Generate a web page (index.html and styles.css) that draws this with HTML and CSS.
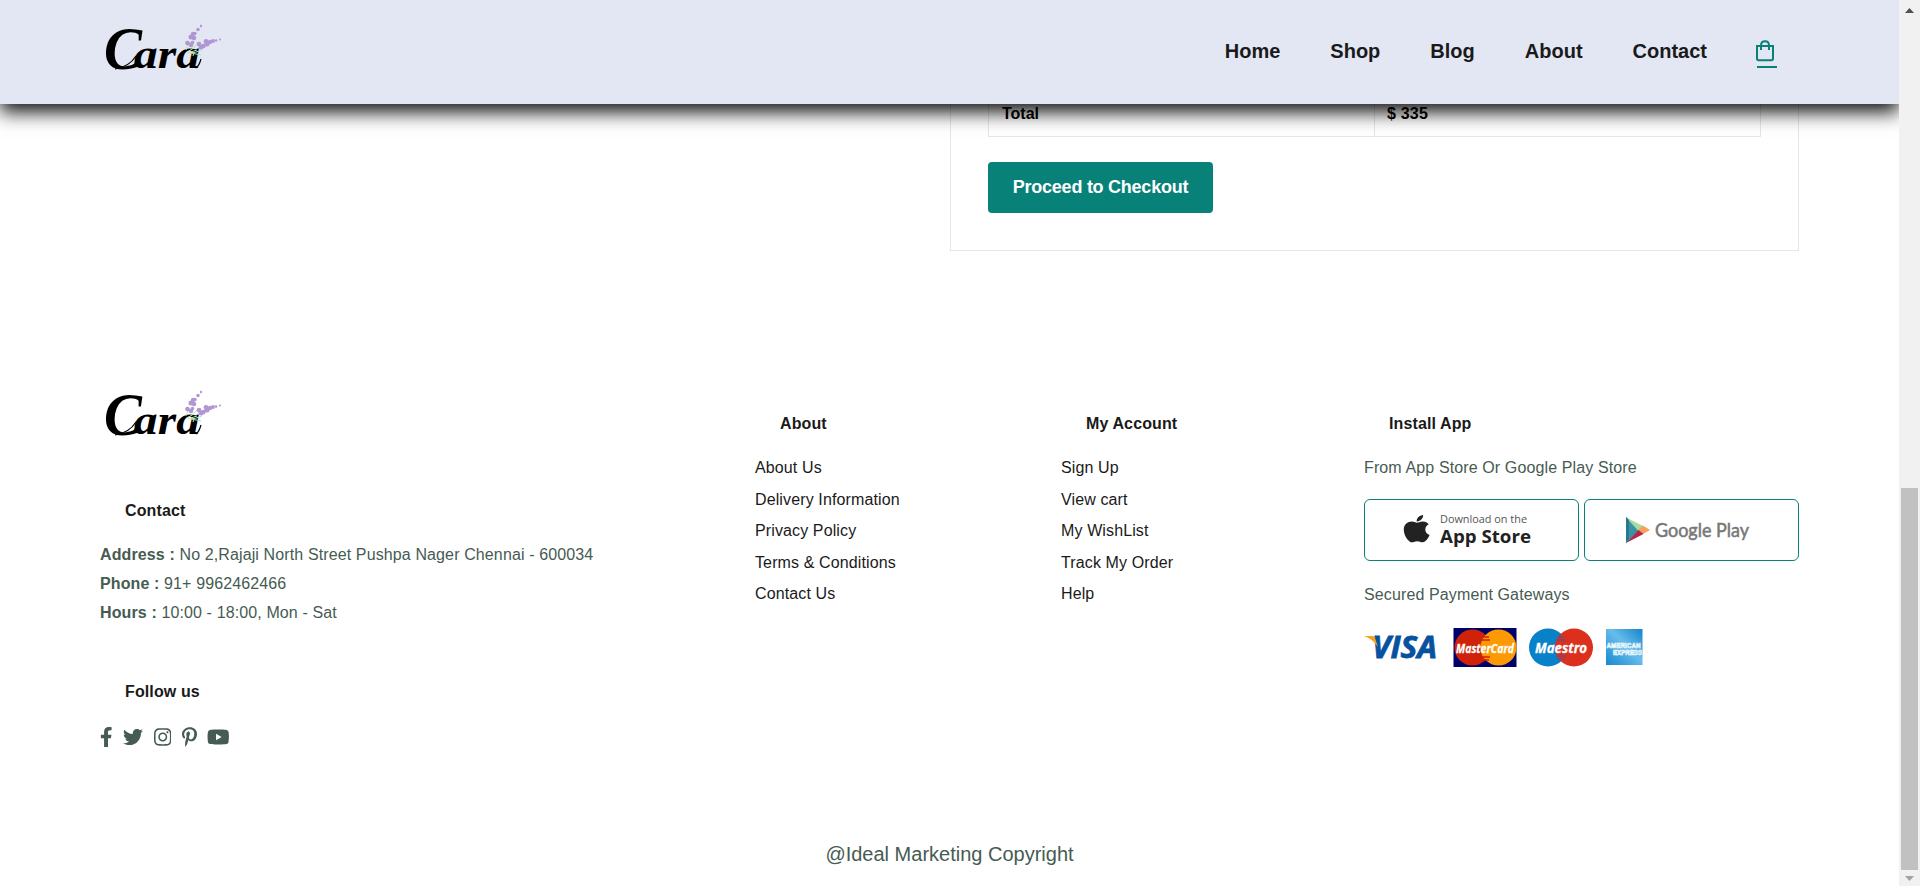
FILE: index.html
```html
<!DOCTYPE html>
<html lang="en">
<head>
<meta charset="utf-8">
<title>Cara - Cart</title>
<link rel="stylesheet" href="styles.css">
</head>
<body>
<svg class="defs" width="0" height="0" aria-hidden="true">
  <defs>
    <symbol id="logo" viewBox="0 0 130 60">
      <g class="logo-text">
        <text x="1" y="51" font-size="61" textLength="38" lengthAdjust="spacingAndGlyphs">C</text>
        <text x="31" y="50" font-size="43" textLength="66" lengthAdjust="spacingAndGlyphs">ara</text>
      </g>
      <path d="M12 51Q26 49 33 38M93 50q3-2 5-9" stroke="#000" stroke-width="1.200" fill="none"/>
      <g stroke="#b5e3b4" stroke-width="1" fill="none">
        <path d="M84 34q7-3 10-8M85 35q8 0 14-3M88 35l10 2M83 32l3-8M88 34l6-2M91 34l-1 4"/>
      </g>
      <g fill="#b096d3">
        <circle cx="84.500" cy="25" r="2.300"/><circle cx="88" cy="27" r="2.300"/><circle cx="89.500" cy="24.500" r="1.800"/>
        <circle cx="88" cy="19" r="2.500"/><circle cx="91" cy="20" r="2.300"/><circle cx="90" cy="16" r="2.200"/><circle cx="92" cy="15.500" r="1.700"/>
        <circle cx="95" cy="11.500" r="1.700"/><circle cx="98" cy="8" r="1.200"/>
        <circle cx="96" cy="26" r="2.300"/><circle cx="98" cy="29" r="2.500"/><circle cx="100.500" cy="28" r="2.200"/>
        <circle cx="103" cy="23.500" r="2.400"/><circle cx="104" cy="26" r="2.500"/><circle cx="107" cy="24" r="2.200"/>
        <circle cx="110" cy="23" r="1.900"/><circle cx="113" cy="22.500" r="1.300"/><circle cx="117" cy="21.500" r="1"/>
      </g>
    </symbol>
  </defs>
</svg>

<header class="header">
  <svg class="logo" width="130" height="60"><use href="#logo"/></svg>
  <nav class="nav">
    <a>Home</a><a>Shop</a><a>Blog</a><a>About</a><a>Contact</a>
    <a class="bag active"><svg width="20" height="22" viewBox="0 0 20 22" fill="none" stroke="#088178" stroke-width="2"><path d="M1 6h16v12.500q0 1.700-1.700 1.700H2.700Q1 20.200 1 18.500z"/><path d="M5 10V5.500q0-4.300 4-4.300t4 4.300V10"/></svg></a>
  </nav>
</header>

<main class="cart">
  <section class="subtotal">
    <div class="row"><strong>Total</strong><strong>$ 335</strong></div>
    <button class="checkout">Proceed to Checkout</button>
  </section>
</main>

<footer class="footer">
  <div class="col contact">
    <svg class="logo" width="130" height="60"><use href="#logo"/></svg>
    <h4>Contact</h4>
    <p><strong>Address :</strong> No 2,Rajaji North Street Pushpa Nager Chennai - 600034</p>
    <p><strong>Phone :</strong> 91+ 9962462466</p>
    <p><strong>Hours :</strong> 10:00 - 18:00, Mon - Sat</p>
    <h4 class="follow">Follow us</h4>
    <div class="social">
      <svg width="12.500" height="20" viewBox="0 0 320 512"><path d="M279.140 288l14.220-92.660h-88.910v-60.130c0-25.350 12.420-50.060 52.240-50.060h40.420V6.260S260.430 0 225.360 0c-73.220 0-121.080 44.380-121.080 124.720v70.620H22.890V288h81.390v224h100.170V288z"/></svg>
      <svg width="20" height="20" viewBox="0 0 512 512"><path d="M459.370 151.716c.325 4.548.325 9.097.325 13.645 0 138.720-105.583 298.558-298.558 298.558-59.452 0-114.680-17.219-161.137-47.106 8.447.974 16.568 1.299 25.340 1.299 49.055 0 94.213-16.568 130.274-44.832-46.132-.975-84.792-31.188-98.112-72.772 6.498.974 12.995 1.624 19.818 1.624 9.421 0 18.843-1.300 27.614-3.573-48.081-9.747-84.143-51.980-84.143-102.985v-1.299c13.969 7.797 30.214 12.670 47.431 13.319-28.264-18.843-46.781-51.005-46.781-87.391 0-19.492 5.197-37.360 14.294-52.954 51.655 63.675 129.300 105.258 216.365 109.807-1.624-7.797-2.599-15.918-2.599-24.040 0-57.828 46.782-104.934 104.934-104.934 30.213 0 57.502 12.670 76.670 33.137 23.715-4.548 46.456-13.320 66.599-25.340-7.798 24.366-24.366 44.833-46.132 57.827 21.117-2.273 41.584-8.122 60.426-16.243-14.292 20.791-32.161 39.308-52.628 54.253z"/></svg>
      <svg width="17.500" height="20" viewBox="0 0 448 512"><path d="M224.100 141c-63.600 0-114.900 51.300-114.900 114.900s51.300 114.900 114.900 114.900S339 319.500 339 255.900 287.700 141 224.100 141zm0 189.600c-41.100 0-74.700-33.500-74.700-74.700s33.500-74.700 74.700-74.700 74.700 33.500 74.700 74.700-33.600 74.700-74.700 74.700zm146.400-194.300c0 14.900-12 26.800-26.800 26.800-14.900 0-26.800-12-26.800-26.800s12-26.800 26.800-26.800 26.800 12 26.800 26.800zm76.100 27.200c-1.700-35.900-9.900-67.700-36.200-93.900-26.200-26.200-58-34.400-93.900-36.200-37-2.100-147.900-2.100-184.900 0-35.800 1.700-67.600 9.900-93.900 36.100s-34.400 58-36.200 93.900c-2.100 37-2.100 147.900 0 184.900 1.700 35.900 9.900 67.700 36.200 93.900s58 34.400 93.900 36.200c37 2.100 147.900 2.100 184.900 0 35.900-1.700 67.700-9.900 93.900-36.200 26.200-26.200 34.400-58 36.200-93.900 2.100-37 2.100-147.800 0-184.800zM398.800 388c-7.800 19.600-22.900 34.700-42.600 42.600-29.500 11.700-99.500 9-132.100 9s-102.700 2.600-132.100-9c-19.600-7.800-34.700-22.900-42.600-42.600-11.700-29.500-9-99.500-9-132.100s-2.600-102.700 9-132.100c7.800-19.600 22.900-34.700 42.600-42.600 29.500-11.700 99.500-9 132.100-9s102.700-2.600 132.100 9c19.600 7.800 34.700 22.900 42.600 42.600 11.700 29.500 9 99.500 9 132.100s2.700 102.700-9 132.100z"/></svg>
      <svg width="15" height="20" viewBox="0 0 384 512"><path d="M204 6.500C101.400 6.500 0 74.900 0 185.600 0 256 39.600 296 63.600 296c9.900 0 15.600-27.600 15.600-35.400 0-9.300-23.700-29.100-23.700-67.800 0-80.400 61.200-137.400 140.400-137.400 68.100 0 118.500 38.700 118.500 109.800 0 53.100-21.300 152.700-90.300 152.700-24.900 0-46.200-18-46.200-43.800 0-37.800 26.400-74.400 26.400-113.400 0-66.200-93.900-54.200-93.900 25.800 0 16.800 2.100 35.400 9.600 50.700-13.800 59.400-42 147.900-42 209.100 0 18.900 2.700 37.500 4.500 56.400 3.400 3.800 1.700 3.400 6.900 1.500 50.400-69 48.600-82.500 71.400-172.800 12.300 23.400 44.100 36 69.300 36 106.200 0 153.900-103.500 153.900-196.800C384 71.300 298.200 6.500 204 6.500z"/></svg>
      <svg width="22.500" height="20" viewBox="0 0 576 512"><path d="M549.655 124.083c-6.281-23.650-24.787-42.276-48.284-48.597C458.781 64 288 64 288 64S117.220 64 74.629 75.486c-23.497 6.322-42.003 24.947-48.284 48.597-11.412 42.867-11.412 132.305-11.412 132.305s0 89.438 11.412 132.305c6.281 23.650 24.787 41.500 48.284 47.821C117.220 448 288 448 288 448s170.780 0 213.371-11.486c23.497-6.321 42.003-24.171 48.284-47.821 11.412-42.867 11.412-132.305 11.412-132.305s0-89.438-11.412-132.305zm-317.510 213.508V175.185l142.739 81.205-142.739 81.201z"/></svg>
    </div>
  </div>
  <div class="col links">
    <h4>About</h4>
    <a>About Us</a><a>Delivery Information</a><a>Privacy Policy</a><a>Terms &amp; Conditions</a><a>Contact Us</a>
  </div>
  <div class="col links">
    <h4>My Account</h4>
    <a>Sign Up</a><a>View cart</a><a>My WishList</a><a>Track My Order</a><a>Help</a>
  </div>
  <div class="col install">
    <h4>Install App</h4>
    <p>From App Store Or Google Play Store</p>
    <div class="stores">
      <div class="store"><svg width="213" height="60" viewBox="0 0 213 60">
        <g transform="translate(38.500 13) scale(.0685 .0610)" fill="#222"><path d="M318.700 268.700c-.2-36.700 16.400-64.400 50-84.800-18.800-26.900-47.200-41.700-84.700-44.600-35.500-2.800-74.300 20.700-88.500 20.700-15 0-49.400-19.700-76.400-19.700C63.300 141.200 4 184.800 4 273.500q0 39.300 14.400 81.200c12.800 36.700 59 126.700 107.200 125.200 25.200-.6 43-17.900 75.800-17.900 31.800 0 48.300 17.900 76.400 17.900 48.600-.7 90.400-82.500 102.600-119.300-65.200-30.700-61.700-90-61.700-91.900zm-56.600-164.200c27.300-32.400 24.800-61.900 24-72.500-24.100 1.400-52 16.400-67.900 34.900-17.500 19.800-27.800 44.300-25.600 71.900 26.100 2 49.900-11.400 69.500-34.300z"/></g>
        <text x="75" y="23" class="badge-small" textLength="87" lengthAdjust="spacingAndGlyphs">Download on the</text>
        <text x="75" y="42.500" class="badge-big" textLength="91" lengthAdjust="spacingAndGlyphs">App Store</text>
      </svg></div>
      <div class="store"><svg width="213" height="60" viewBox="0 0 213 60">
        <path d="M41 17l13 13-13 13z" fill="#3a93a5"/><path d="M41 17.500L59 26.500 53.500 31z" fill="#a6dba0"/><path d="M58 25.500L65 30l-7 4-5-4z" fill="#f7a15d"/><path d="M41 43L53.500 30l5 4z" fill="#b0274c"/><path d="M41 17v26l3-3V20z" fill="#26798f"/>
        <text x="70" y="36.500" class="badge-play" textLength="94" lengthAdjust="spacingAndGlyphs">Google Play</text>
      </svg></div>
    </div>
    <p>Secured Payment Gateways</p>
    <svg class="pay" width="280" height="40" viewBox="0 0 280 40">
      <defs><linearGradient id="ax" x1="1" y1="0" x2="0" y2="1"><stop offset="0" stop-color="#1583cc"/><stop offset=".45" stop-color="#66bdec"/><stop offset="1" stop-color="#1687cf"/></linearGradient></defs>
      <text x="8" y="30" class="visa" textLength="65" lengthAdjust="spacingAndGlyphs">VISA</text>
      <path d="M0 8h8.500q2 0 2.500 2l3 9Q9 11 0 8z" fill="#f6a21b"/>
      <path d="M89.500 0h63v39h-63z" fill="#00006b"/>
      <circle cx="108.500" cy="19.500" r="18" fill="#d02208"/><circle cx="134.500" cy="19.500" r="18" fill="#fd9a03"/>
      <path d="M119 9h6M117 12h9M116 29h10M119 32h6" stroke="#d02208" stroke-width="1.500"/>
      <text x="92" y="25" class="card" textLength="58" lengthAdjust="spacingAndGlyphs">MasterCard</text>
      <circle cx="184" cy="19.500" r="19" fill="#0881c8"/><circle cx="210" cy="19.500" r="19" fill="#dc301e"/>
      <path d="M194 9h6M192 12h10M192 28h10M194 31h6" stroke="#754876" stroke-width="1.500"/>
      <text x="171" y="25" class="card maestro" textLength="52" lengthAdjust="spacingAndGlyphs">Maestro</text>
      <path d="M242 1h36.500v36H242z" fill="url(#ax)"/>
      <text x="242.500" y="19.500" class="amex" textLength="34" lengthAdjust="spacingAndGlyphs">AMERICAN</text>
      <text x="249" y="27" class="amex" textLength="29" lengthAdjust="spacingAndGlyphs">EXPRESS</text>
    </svg>
  </div>
  <p class="copyright">@Ideal Marketing Copyright</p>
</footer>

<aside class="scrollbar">
  <svg width="9" height="5" viewBox="0 0 9 5"><path d="M4.500 0L9 5H0z" fill="#505050"/></svg>
  <div class="thumb"></div>
  <svg width="9" height="5" viewBox="0 0 9 5"><path d="M4.500 5L9 0H0z" fill="#a3a3a3"/></svg>
</aside>
</body>
</html>
```
FILE: styles.css
```css
* { box-sizing: border-box; margin: 0; padding: 0; }
html, body { height: 886px; overflow: hidden; }
body { width: 1920px; padding-right: 21px; background: #fff; font-family: "Liberation Sans", Arial, sans-serif; font-size: 16px; color: #465b52; }
.defs { position: absolute; }
.logo { display: block; }
.logo-text { font-family: "Liberation Serif", serif; font-weight: bold; font-style: italic; fill: #000; }

.header { position: relative; z-index: 2; display: flex; justify-content: space-between; align-items: flex-start; height: 104px; padding: 18px 122px 0 103px; background: #e3e6f3; box-shadow: 0 8px 18px rgba(0, 0, 0, .93); }
.nav { display: flex; gap: 50px; padding-top: 22px; font-size: 20px; font-weight: bold; line-height: 23px; color: #1a1a1a; }
.bag { width: 20px; height: 28px; }
.bag svg { display: block; margin-left: -1px; }
.active { border-bottom: 2px solid #088178; }

.cart { display: flex; justify-content: flex-end; height: 147px; padding-right: 100px; }
.subtotal { width: 849px; padding: 0 38px 37px 37px; border: solid #e2e9e1; border-width: 0 1px 1px; }
.row { display: grid; grid-template-columns: 385px 1fr; width: 773px; height: 33px; border: solid #e2e9e1; border-width: 0 1px 1px; color: #000; line-height: 20px; }
.row strong { padding-left: 13px; }
.row strong + strong { padding-left: 12px; border-left: 1px solid #e2e9e1; letter-spacing: .2px; }
.checkout { display: block; width: 225px; height: 51px; margin-top: 25px; border: 0; border-radius: 4px; background: #088178; color: #fff; font: bold 18px "Liberation Sans", Arial, sans-serif; letter-spacing: -.25px; }

.footer { display: grid; grid-template-columns: 655px 306px 303px 435px; grid-template-rows: 459px auto; padding: 133px 100px 0; }
.col { letter-spacing: .12px; }
.col h4 { padding-left: 25px; line-height: 18px; font-size: 16px; color: #1a1a1a; }
.contact .logo { margin-left: 3px; }
.contact h4 { margin: 58px 0 20px; }
.contact p { line-height: 29px; }
.contact .follow { margin: 56px 0 26px; }
.social { display: flex; gap: 10.500px; fill: #465b52; }
.links, .install { padding-top: 31px; }
.links a { display: block; height: 31.500px; line-height: 18px; color: #1a1a1a; }
.links h4, .install h4 { margin-bottom: 26px; }
.install p { line-height: 18px; }
.stores { display: flex; gap: 5px; width: 435px; margin: 22px 0 25px; }
.store { width: 215px; height: 62px; border: 1px solid #088178; border-radius: 6px; letter-spacing: 0; }
.pay { display: block; margin-top: 24px; overflow: visible; letter-spacing: 0; }
.badge-small { font: 11px "Open Sans", sans-serif; fill: #555; }
.badge-big { font: bold 18px "Open Sans", sans-serif; fill: #222; }
.badge-play { font: 18.500px Lato, sans-serif; fill: #777; stroke: #777; stroke-width: .5px; }
.visa { font: italic bold 30px "Open Sans", sans-serif; fill: #0752a0; stroke: #0752a0; stroke-width: .8px; }
.card { font: italic bold 13px "Open Sans", sans-serif; fill: #fff; stroke: #fff; stroke-width: .3px; }
.maestro { font-size: 14px; }
.amex { font: bold 7px "Liberation Sans", sans-serif; fill: #75c5ef; stroke: #fff; stroke-width: .6px; }
.copyright { grid-column: 1 / -1; text-align: center; font-size: 20px; line-height: 23px; }

.scrollbar { position: absolute; top: 0; right: 0; z-index: 3; display: flex; flex-direction: column; align-items: center; width: 21px; height: 886px; padding: 8px 0 5px; background: #f1f1f1; }
.thumb { width: 17px; height: 382px; margin: 475px 0 auto; background: #c1c1c1; }
```
